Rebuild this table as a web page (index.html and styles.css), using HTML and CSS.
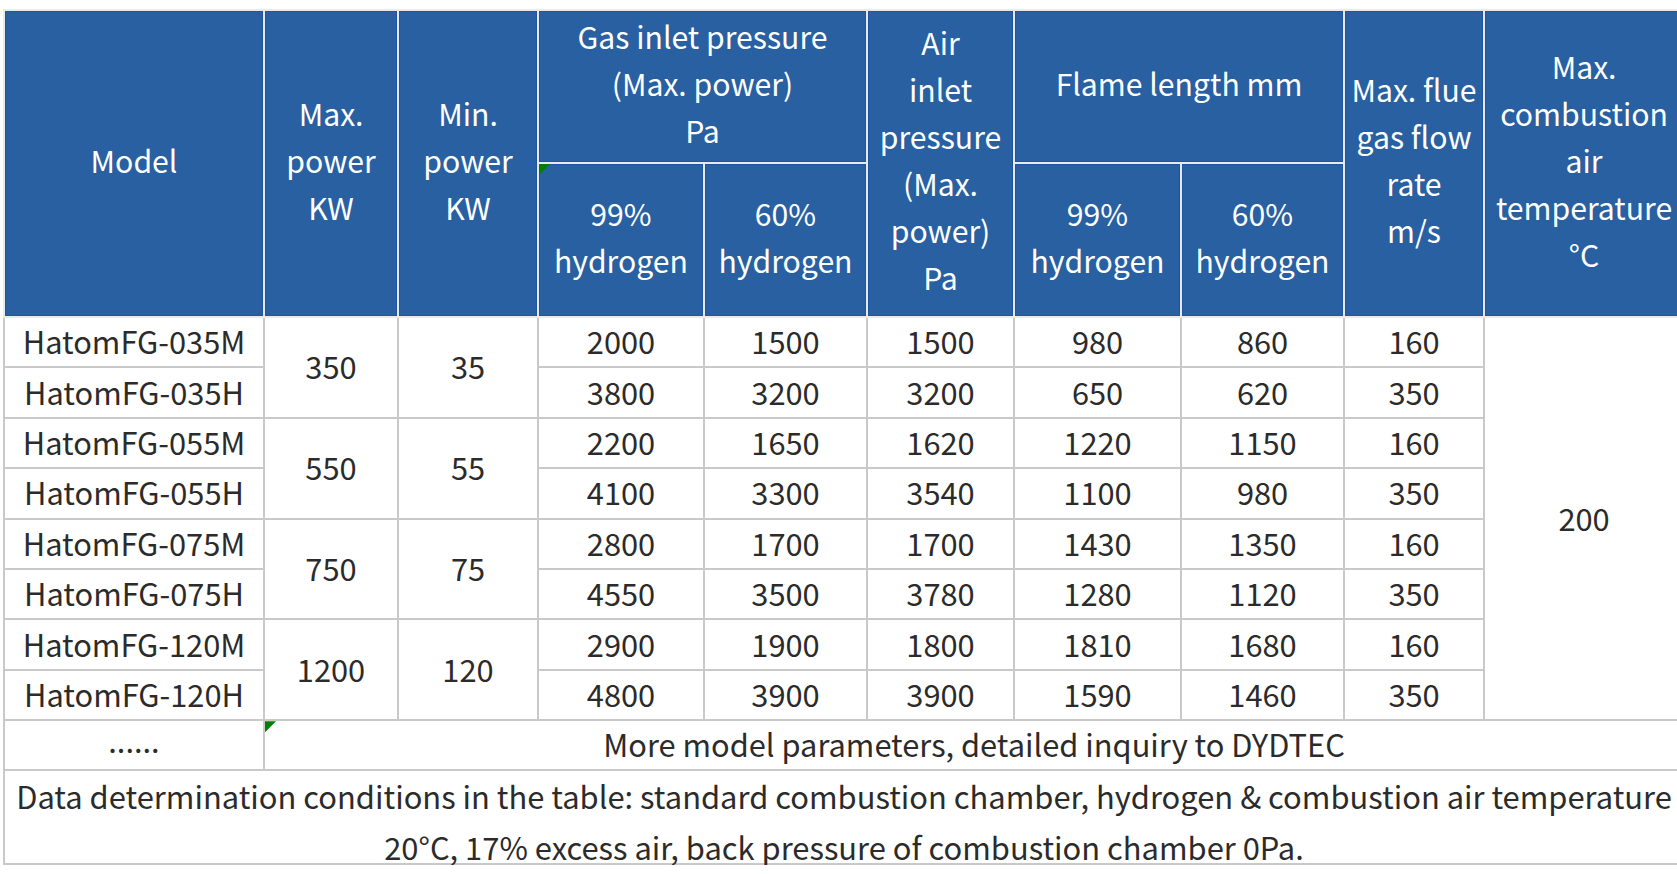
FILE: index.html
```html
<!DOCTYPE html>
<html lang="en">
<head>
<meta charset="utf-8">
<title>HatomFG parameters</title>
<link rel="stylesheet" href="styles.css">
</head>
<body>
<div class="wrap">
<table class="spec">
  <colgroup>
    <col class="c-model">
    <col class="c-maxp">
    <col class="c-minp">
    <col class="c-g99">
    <col class="c-g60">
    <col class="c-air">
    <col class="c-f99">
    <col class="c-f60">
    <col class="c-flue">
    <col class="c-temp">
  </colgroup>
  <thead>
    <tr class="h1">
      <th rowspan="2">Model</th>
      <th rowspan="2">Max.<br>power<br>KW</th>
      <th rowspan="2">Min.<br>power<br>KW</th>
      <th colspan="2">Gas inlet pressure<br>(Max. power)<br>Pa</th>
      <th rowspan="2">Air<br>inlet<br>pressure<br>(Max.<br>power)<br>Pa</th>
      <th colspan="2">Flame length mm</th>
      <th rowspan="2">Max. flue<br>gas flow<br>rate<br>m/s</th>
      <th rowspan="2">Max.<br>combustion<br>air<br>temperature<br>°C</th>
    </tr>
    <tr class="h2">
      <th class="flag-cell"><span class="flag"></span>99%<br>hydrogen</th>
      <th>60%<br>hydrogen</th>
      <th>99%<br>hydrogen</th>
      <th>60%<br>hydrogen</th>
    </tr>
  </thead>
  <tbody>
    <tr><td>HatomFG-035M</td><td rowspan="2">350</td><td rowspan="2">35</td><td>2000</td><td>1500</td><td>1500</td><td>980</td><td>860</td><td>160</td><td rowspan="8" class="temp">200</td></tr>
    <tr><td>HatomFG-035H</td><td>3800</td><td>3200</td><td>3200</td><td>650</td><td>620</td><td>350</td></tr>
    <tr><td>HatomFG-055M</td><td rowspan="2">550</td><td rowspan="2">55</td><td>2200</td><td>1650</td><td>1620</td><td>1220</td><td>1150</td><td>160</td></tr>
    <tr><td>HatomFG-055H</td><td>4100</td><td>3300</td><td>3540</td><td>1100</td><td>980</td><td>350</td></tr>
    <tr><td>HatomFG-075M</td><td rowspan="2">750</td><td rowspan="2">75</td><td>2800</td><td>1700</td><td>1700</td><td>1430</td><td>1350</td><td>160</td></tr>
    <tr><td>HatomFG-075H</td><td>4550</td><td>3500</td><td>3780</td><td>1280</td><td>1120</td><td>350</td></tr>
    <tr><td>HatomFG-120M</td><td rowspan="2">1200</td><td rowspan="2">120</td><td>2900</td><td>1900</td><td>1800</td><td>1810</td><td>1680</td><td>160</td></tr>
    <tr><td>HatomFG-120H</td><td>4800</td><td>3900</td><td>3900</td><td>1590</td><td>1460</td><td>350</td></tr>
    <tr class="more"><td class="dots">......</td><td colspan="9" class="flag-cell"><span class="flag"></span>More model parameters, detailed inquiry to DYDTEC</td></tr>
    <tr class="note"><td colspan="10"><div class="note-text">Data determination conditions in the table: standard combustion chamber, hydrogen &amp; combustion air temperature<br>20°C, 17% excess air, back pressure of combustion chamber 0Pa.</div></td></tr>
  </tbody>
</table>
</div>
</body>
</html>
```

FILE: styles.css
```css
html, body {
  margin: 0;
  padding: 0;
  background: #ffffff;
  overflow: hidden;
}

.wrap {
  padding: 9px 0 0 3px;
}

.spec {
  width: 1680px;
  table-layout: fixed;
  border-collapse: collapse;
  font-family: "Noto Sans CJK SC", "Noto Sans", sans-serif;
  font-size: 30.8px;
  line-height: 46px;
  color: #2b2b2b;
  text-align: center;
}

.c-model { width: 260px; }
.c-maxp { width: 134px; }
.c-minp { width: 140px; }
.c-g99 { width: 166px; }
.c-g60 { width: 163px; }
.c-air { width: 147px; }
.c-f99 { width: 167px; }
.c-f60 { width: 163px; }
.c-flue { width: 140px; }
.c-temp { width: 200px; }

.spec th,
.spec td {
  padding: 0;
  vertical-align: middle;
  white-space: nowrap;
}

.spec th {
  background: #2860a2;
  color: #ffffff;
  font-weight: 400;
  font-size: 30.2px;
  line-height: 47px;
  padding-bottom: 7px;
  border: 2px solid #e6ebf1;
  box-shadow: inset 0 0 0 1px #1d55a0;
}

.spec thead tr.h1 { height: 153px; }
.spec thead tr.h2 { height: 154px; }

.spec td {
  border: 2px solid #c9c9c9;
  padding-bottom: 2px;
}

.spec tbody tr { height: 50.4px; }
.spec tbody tr.more { height: 50px; }
.spec tbody tr.note { height: 94px; }

.spec td.dots {
  line-height: 34px;
  padding-bottom: 10px;
}

.spec tr.note td {
  vertical-align: top;
  padding: 0;
  font-size: 30.9px;
}

.note-text {
  height: 90px;
  margin-top: -1px;
  line-height: 51px;
  overflow: visible;
}

.flag-cell {
  position: relative;
}

.flag {
  position: absolute;
  left: 0;
  top: 0;
  width: 11px;
  height: 11px;
  background: #008000;
  clip-path: polygon(0 0, 100% 0, 0 100%);
}
```
